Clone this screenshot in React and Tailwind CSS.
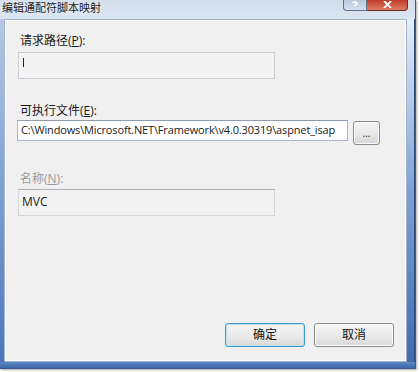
import React from 'react';

const cjk = { fontFamily: '"Open Sans", "Noto Sans CJK SC", sans-serif' };

const TextBox = ({ className = '', children }) => (
  <div className={`border flex items-center pl-[3px] text-[12px] text-[#1a1a1a] ${className}`}>
    {children}
  </div>
);

const DlgButton = ({ focused, children, className = '' }) => (
  <div
    className={`h-[24px] w-[80px] rounded-[3px] border flex items-center justify-center text-[12px] text-[#111] bg-gradient-to-b from-[#f4f4f4] via-[#ebebeb] to-[#d9d9d9] ${
      focused ? 'border-[#3c9bd4] shadow-[inset_0_0_0_1px_#b9e3f7]' : 'border-[#8c8c8c] shadow-[inset_0_0_0_1px_#fbfbfb]'
    } ${className}`}
  >
    {children}
  </div>
);

const App = () => {
  return (
    <div className="w-[420px] h-[372px] bg-white overflow-hidden" style={cjk}>
      {/* Window frame */}
      <div className="w-[416px] h-[369px] flex flex-col bg-gradient-to-b from-[#dfe8f4] via-[#b9cde8] to-[#4c78b8] border-r border-b border-[#3a5a8a] shadow-[1px_1px_2px_rgba(0,0,0,0.35)]">
        {/* Title bar */}
        <div className="h-[19px] flex items-start relative bg-gradient-to-b from-[#d3deec] to-[#dbe5f2]">
          <span className="pl-[2px] pt-[1px] text-[11px] leading-[13px] text-[#1b1b1b] [text-shadow:0_0_4px_#fff]">
            编辑通配符脚本映射
          </span>
          <div className="absolute left-[343px] top-0 flex">
            <div className="w-[24px] h-[11px] rounded-bl-[4px] border border-t-0 border-[#5d7390] bg-gradient-to-b from-[#b8c8dc] to-[#d5e0ee] flex items-end justify-center">
              <svg width="8" height="7" viewBox="0 0 8 7" className="mb-[2px]">
                <path d="M2 2.2 C2 0.6 6 0.6 6 2.2 C6 3.4 4 3.4 4 5" stroke="#ffffff" strokeWidth="1.6" fill="none" />
              </svg>
            </div>
            <div className="w-[41px] h-[11px] rounded-br-[4px] border border-l-0 border-t-0 border-[#6b2a22] bg-gradient-to-b from-[#c0392b] to-[#e07a62] flex items-end justify-center">
              <svg width="9" height="7" viewBox="0 0 9 7" className="mb-[2px]">
                <path d="M1 0 L8 7 M8 0 L1 7" stroke="#ffffff" strokeWidth="1.8" />
              </svg>
            </div>
          </div>
        </div>

        {/* Body row */}
        <div className="flex flex-1">
          <div className="w-[4px] bg-gradient-to-b from-[#b6c9e4] to-[#4a77bb]" />
          <div className="w-[403px] h-[343px] bg-[#f0f0f0] border border-[#9fb3cf] shadow-[inset_1px_1px_0_#ffffff,inset_-1px_-1px_0_#ffffff] flex flex-col relative">
            <div className="ml-[15px] mt-[13px] text-[12px] leading-[16px] text-[#1a1a1a]">
              请求路径(<span className="underline">P</span>):
            </div>
            <TextBox className="ml-[13px] mt-[3px] w-[257px] h-[27px] bg-[#f4f4f4] border-[#c9cfd6] items-start pt-[5px]">
              <div className="w-[1px] h-[9px] bg-[#222] ml-[1px]" />
            </TextBox>

            <div className="ml-[15px] mt-[24px] text-[12px] leading-[16px] text-[#1a1a1a]">
              可执行文件(<span className="underline">E</span>):
            </div>
            <div className="flex items-start mt-[1px]">
              <TextBox className="ml-[12px] w-[331px] h-[21px] bg-white border-[#aab7c8] border-t-[#8e9cae] !text-[11px] tracking-[-0.15px] whitespace-nowrap">
                C:\Windows\Microsoft.NET\Framework\v4.0.30319\aspnet_isap
              </TextBox>
              <div className="ml-[5px] mt-[1px] w-[27px] h-[24px] rounded-[3px] border border-[#8c8c8c] shadow-[inset_0_0_0_1px_#fbfbfb] bg-gradient-to-b from-[#f4f4f4] via-[#ebebeb] to-[#d6d6d6] flex items-center justify-center text-[10px] text-[#222] leading-none">
                ...
              </div>
            </div>

            <div className="ml-[15px] mt-[26px] text-[12px] leading-[16px] text-[#9a9a9a]">
              名称(<span className="underline">N</span>):
            </div>
            <TextBox className="ml-[13px] mt-[2px] w-[257px] h-[27px] bg-[#f2f2f2] border-[#d2d6db] border-t-[#a8b0ba] items-start pt-[3px]">
              MVC
            </TextBox>

            <div className="flex gap-[9px] ml-[220px] mt-[107px]">
              <DlgButton focused>确定</DlgButton>
              <DlgButton>取消</DlgButton>
            </div>
          </div>
          <div className="flex-1 bg-gradient-to-b from-[#e6eef8] via-[#7ea2d4] to-[#3f6db2] border-r border-[#2f4d7a]" />
        </div>
        <div className="h-[6px] bg-gradient-to-b from-[#5d88c6] to-[#3d66a4]" />
      </div>
    </div>
  );
};

export default App;
